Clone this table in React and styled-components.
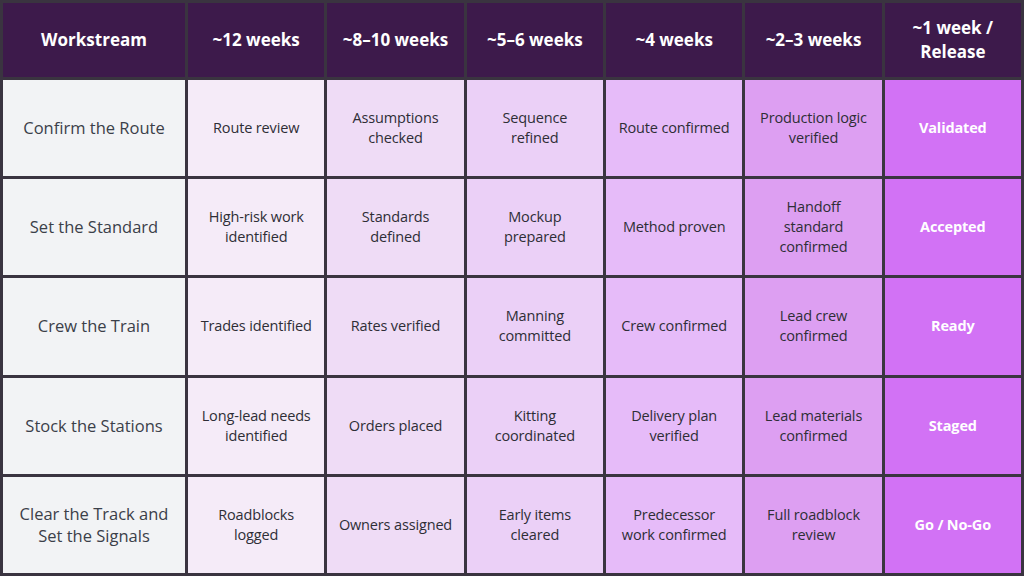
import React from "react";
import styled, { createGlobalStyle } from "styled-components";

const GlobalStyle = createGlobalStyle`
  html, body {
    margin: 0;
    padding: 0;
    background: #3a3440;
  }
  * {
    box-sizing: border-box;
  }
`;

// one shade per week column, lightest to strongest
const shades = ["#f5ebf8", "#efdcf6", "#ebd0f7", "#e6bbf9", "#dd9ff2", "#d272f5"];

const Table = styled.div`
  width: 1024px;
  height: 576px;
  display: grid;
  grid-template-columns: 182px repeat(6, 1fr);
  grid-template-rows: 74px repeat(5, 1fr);
  gap: 3px;
  padding: 3px;
  background: #3a3440;
  font-family: "Open Sans", "Liberation Sans", sans-serif;
`;

const HeadCell = styled.div`
  background: #3d1a4b;
  color: #ffffff;
  font-weight: 700;
  font-size: 17px;
  line-height: 24px;
  display: flex;
  align-items: center;
  justify-content: center;
  text-align: center;
  white-space: nowrap;
  padding: 0 6px;
`;

const Cell = styled.div`
  background: ${(p) => p.$bg};
  color: ${(p) => (p.$strong ? "#ffffff" : "#2e2e36")};
  font-weight: ${(p) => (p.$strong ? 700 : 400)};
  font-size: 14.5px;
  line-height: 20px;
  letter-spacing: -0.15px;
  display: flex;
  align-items: center;
  justify-content: center;
  text-align: center;
  white-space: nowrap;
  padding: 0 2px;
`;

const NameCell = styled(Cell)`
  background: #f2f3f5;
  color: #3b4049;
  font-size: 16.5px;
  line-height: 22px;
  letter-spacing: 0;
`;

const headers = [
  "Workstream",
  "~12 weeks",
  "~8–10 weeks",
  "~5–6 weeks",
  "~4 weeks",
  "~2–3 weeks",
  "~1 week /\nRelease",
];

const rows = [
  ["Confirm the Route", "Route review", "Assumptions\nchecked", "Sequence\nrefined", "Route confirmed", "Production logic\nverified", "Validated"],
  ["Set the Standard", "High-risk work\nidentified", "Standards\ndefined", "Mockup\nprepared", "Method proven", "Handoff\nstandard\nconfirmed", "Accepted"],
  ["Crew the Train", "Trades identified", "Rates verified", "Manning\ncommitted", "Crew confirmed", "Lead crew\nconfirmed", "Ready"],
  ["Stock the Stations", "Long-lead needs\nidentified", "Orders placed", "Kitting\ncoordinated", "Delivery plan\nverified", "Lead materials\nconfirmed", "Staged"],
  ["Clear the Track and\nSet the Signals", "Roadblocks\nlogged", "Owners assigned", "Early items\ncleared", "Predecessor\nwork confirmed", "Full roadblock\nreview", "Go / No-Go"],
];

const Lines = ({ text }) =>
  text.split("\n").map((t, i) => (
    <React.Fragment key={i}>
      {i > 0 && <br />}
      {t}
    </React.Fragment>
  ));

export default function App() {
  return (
    <>
      <GlobalStyle />
      <Table>
        {headers.map((h) => (
          <HeadCell key={h}>
            <span>
              <Lines text={h} />
            </span>
          </HeadCell>
        ))}
        {rows.map((row) =>
          row.map((c, i) =>
            i === 0 ? (
              <NameCell key={c}>
                <span>
                  <Lines text={c} />
                </span>
              </NameCell>
            ) : (
              <Cell key={row[0] + i} $bg={shades[i - 1]} $strong={i === 6}>
                <span>
                  <Lines text={c} />
                </span>
              </Cell>
            )
          )
        )}
      </Table>
    </>
  );
}
